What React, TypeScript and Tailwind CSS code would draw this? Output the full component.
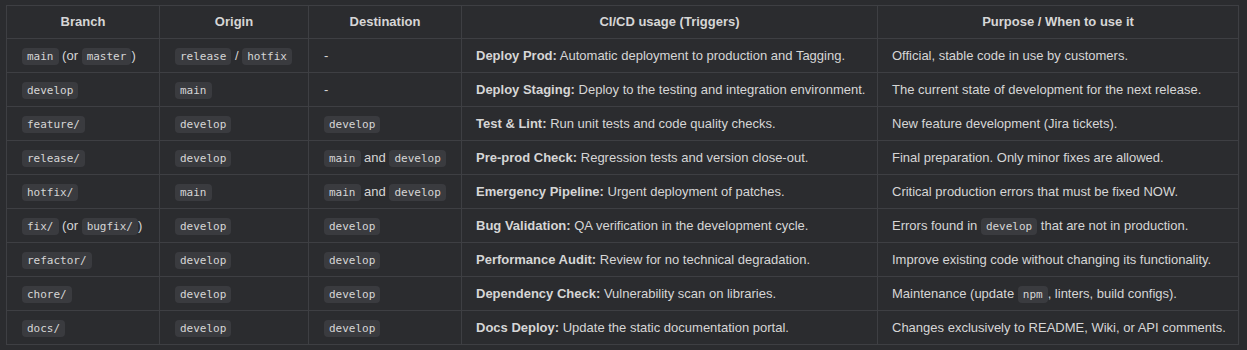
import React from 'react';

const C: React.FC<{ children: React.ReactNode }> = ({ children }) => (
  <code className="rounded-[4px] bg-[#3a3b3f] px-[5px] py-[2px] text-[11px] text-[#d6d6d6] [font-family:'DejaVu_Sans_Mono',monospace]">
    {children}
  </code>
);

type Row = {
  branch: React.ReactNode;
  origin: React.ReactNode;
  dest: React.ReactNode;
  title: string;
  usage: string;
  purpose: React.ReactNode;
};

const rows: Row[] = [
  {
    branch: (<><C>main</C> (or <C>master</C>)</>),
    origin: (<><C>release</C> / <C>hotfix</C></>),
    dest: '-',
    title: 'Deploy Prod:',
    usage: 'Automatic deployment to production and Tagging.',
    purpose: 'Official, stable code in use by customers.',
  },
  {
    branch: <C>develop</C>,
    origin: <C>main</C>,
    dest: '-',
    title: 'Deploy Staging:',
    usage: 'Deploy to the testing and integration environment.',
    purpose: 'The current state of development for the next release.',
  },
  {
    branch: <C>feature/</C>,
    origin: <C>develop</C>,
    dest: <C>develop</C>,
    title: 'Test & Lint:',
    usage: 'Run unit tests and code quality checks.',
    purpose: 'New feature development (Jira tickets).',
  },
  {
    branch: <C>release/</C>,
    origin: <C>develop</C>,
    dest: (<><C>main</C> and <C>develop</C></>),
    title: 'Pre-prod Check:',
    usage: 'Regression tests and version close-out.',
    purpose: 'Final preparation. Only minor fixes are allowed.',
  },
  {
    branch: <C>hotfix/</C>,
    origin: <C>main</C>,
    dest: (<><C>main</C> and <C>develop</C></>),
    title: 'Emergency Pipeline:',
    usage: 'Urgent deployment of patches.',
    purpose: 'Critical production errors that must be fixed NOW.',
  },
  {
    branch: (<><C>fix/</C> (or <C>bugfix/</C>)</>),
    origin: <C>develop</C>,
    dest: <C>develop</C>,
    title: 'Bug Validation:',
    usage: 'QA verification in the development cycle.',
    purpose: (<>Errors found in <C>develop</C> that are not in production.</>),
  },
  {
    branch: <C>refactor/</C>,
    origin: <C>develop</C>,
    dest: <C>develop</C>,
    title: 'Performance Audit:',
    usage: 'Review for no technical degradation.',
    purpose: 'Improve existing code without changing its functionality.',
  },
  {
    branch: <C>chore/</C>,
    origin: <C>develop</C>,
    dest: <C>develop</C>,
    title: 'Dependency Check:',
    usage: 'Vulnerability scan on libraries.',
    purpose: (<>Maintenance (update <C>npm</C>, linters, build configs).</>),
  },
  {
    branch: <C>docs/</C>,
    origin: <C>develop</C>,
    dest: <C>develop</C>,
    title: 'Docs Deploy:',
    usage: 'Update the static documentation portal.',
    purpose: 'Changes exclusively to README, Wiki, or API comments.',
  },
];

const headers = ['Branch', 'Origin', 'Destination', 'CI/CD usage (Triggers)', 'Purpose / When to use it'];

export default function App() {
  return (
    <div className="min-h-[350px] w-full bg-[#2b2c2f] pl-[6px] pt-[5px] text-[13px] text-[#d6d6d6] [font-family:'Liberation_Sans',Arial,sans-serif]">
      <table className="w-[1232px] table-fixed border-collapse">
        <colgroup>
          <col className="w-[153px]" />
          <col className="w-[149px]" />
          <col className="w-[153px]" />
          <col className="w-[416px]" />
          <col className="w-[361px]" />
        </colgroup>
        <thead>
          <tr className="h-[33px]">
            {headers.map((h) => (
              <th key={h} className="border border-[#3e3f43] px-[14px] text-center font-bold">
                {h}
              </th>
            ))}
          </tr>
        </thead>
        <tbody>
          {rows.map((r, i) => (
            <tr key={i} className="h-[34px]">
              <td className="whitespace-nowrap border border-[#3e3f43] px-[15px]">{r.branch}</td>
              <td className="whitespace-nowrap border border-[#3e3f43] px-[15px]">{r.origin}</td>
              <td className="whitespace-nowrap border border-[#3e3f43] px-[15px]">{r.dest}</td>
              <td className="whitespace-nowrap border border-[#3e3f43] px-[14px]">
                <strong className="font-bold">{r.title}</strong> {r.usage}
              </td>
              <td className="whitespace-nowrap border border-[#3e3f43] px-[14px]">{r.purpose}</td>
            </tr>
          ))}
        </tbody>
      </table>
    </div>
  );
}
